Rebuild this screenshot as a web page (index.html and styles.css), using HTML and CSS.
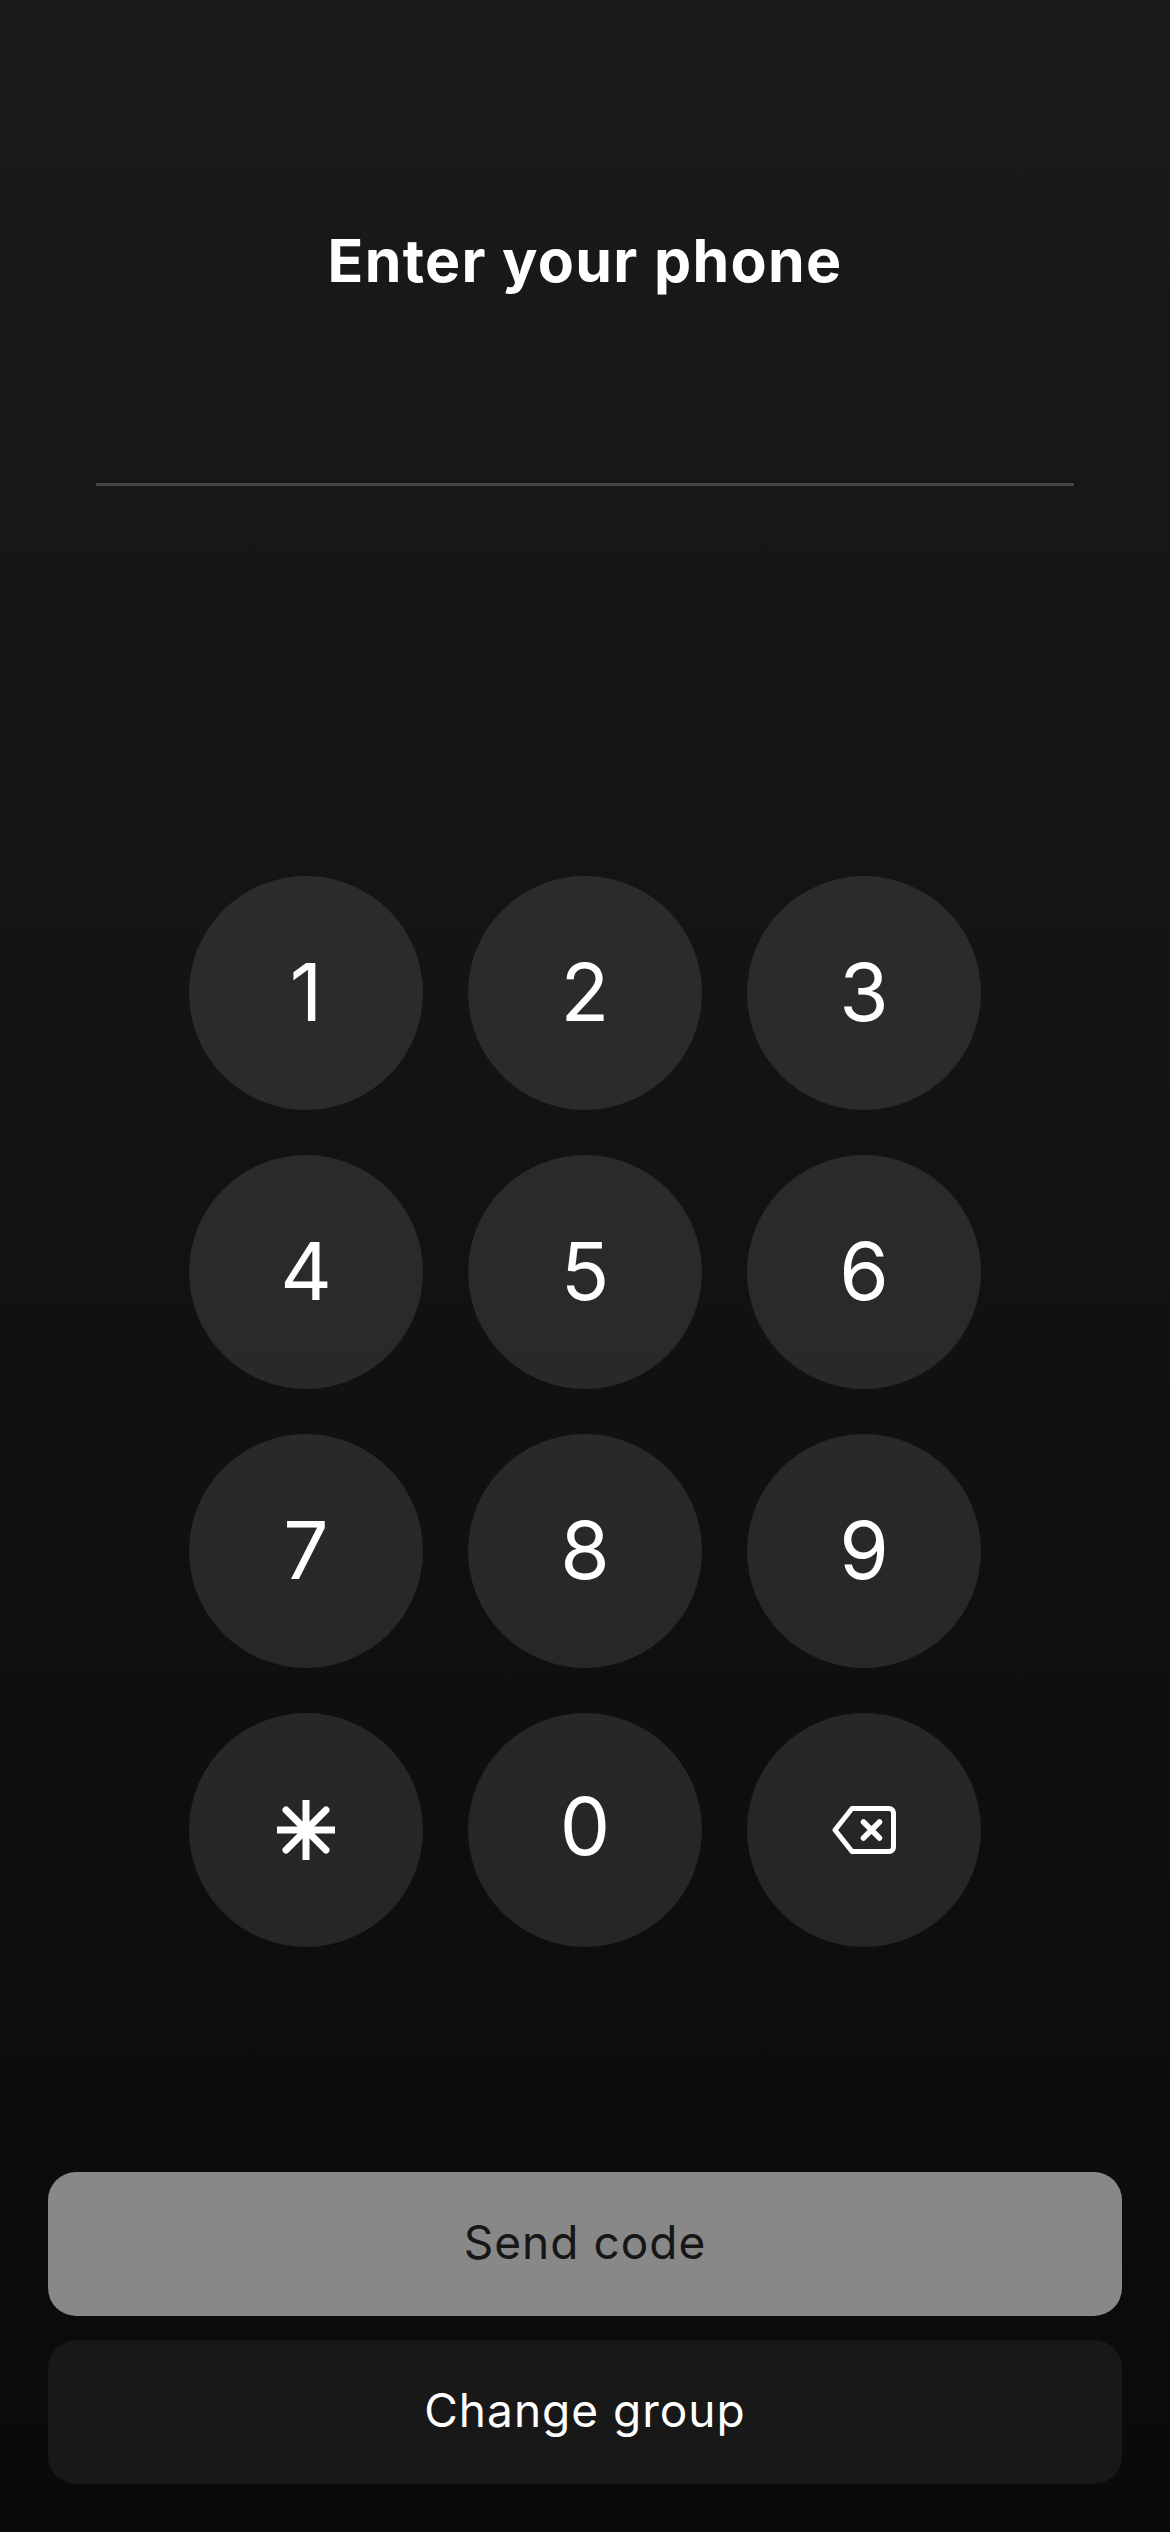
FILE: index.html
```html
<!DOCTYPE html>
<html>
	<head>
		<meta charset="utf-8">
		<title>Enter your phone</title>
		<link rel="stylesheet" href="styles.css">
	</head>
	<body>
		<div class="screen">
			<h1 class="title">Enter your phone</h1>
			<div class="phone-line"></div>
			<div class="keypad">
				<div class="key">1</div>
				<div class="key">2</div>
				<div class="key">3</div>
				<div class="key">4</div>
				<div class="key">5</div>
				<div class="key">6</div>
				<div class="key">7</div>
				<div class="key">8</div>
				<div class="key">9</div>
				<div class="key icon-key">
					<svg class="star-icon" viewBox="0 0 60 60" width="60" height="60">
						<path d="M30 0V60M1 30H59" stroke="#fff" stroke-width="7" fill="none"/>
						<path d="M10 10L50 50M50 10L10 50" stroke="#fff" stroke-width="7" stroke-linecap="round" fill="none"/>
					</svg>
				</div>
				<div class="key zero">0</div>
				<div class="key icon-key">
					<svg class="back-icon" viewBox="0 0 64 48" width="64" height="48">
						<path d="M20 2.500H57C59.500 2.500 61.500 4.500 61.500 7V41C61.500 43.500 59.500 45.500 57 45.500H20L3 24Z" stroke="#fff" stroke-width="5" stroke-linejoin="round" fill="none"/>
						<path d="M31.500 16L47.500 32M47.500 16L31.500 32" stroke="#fff" stroke-width="5.500" stroke-linecap="round" fill="none"/>
					</svg>
				</div>
			</div>
			<div class="actions">
				<button class="btn btn-send">Send code</button>
				<button class="btn btn-group">Change group</button>
			</div>
		</div>
	</body>
</html>
```
FILE: styles.css
```css
html, body {
	margin: 0;
	padding: 0;
}

body {
	font-family: Inter, "Liberation Sans", sans-serif;
	color: white;
	background-color: #0a0a0a;
}

.screen {
	height: 2532px;
	box-sizing: border-box;
	padding: 226px 48px 48px;
	display: flex;
	flex-direction: column;
	align-items: center;
	background: linear-gradient(to bottom, #1a1a1a, #0a0a0a);
}

.title {
	margin: 0;
	font-size: 59px;
	line-height: 70px;
	font-weight: 700;
	letter-spacing: 1.3px;
}

.phone-line {
	width: 978px;
	height: 3px;
	margin-top: 187px;
	background-color: #444;
}

.keypad {
	display: grid;
	grid-template-columns: repeat(3, 234px);
	grid-auto-rows: 234px;
	gap: 45px;
	margin-top: 390px;
}

.key {
	display: flex;
	align-items: center;
	justify-content: center;
	box-sizing: border-box;
	padding-bottom: 3px;
	border-radius: 50%;
	background-color: rgba(255, 255, 255, 0.1);
	font-size: 80px;
	font-weight: 400;
}

.icon-key {
	padding-bottom: 0;
}

.zero {
	padding-bottom: 10px;
}

.actions {
	margin-top: auto;
	width: 100%;
	display: flex;
	flex-direction: column;
	gap: 24px;
}

.btn {
	height: 144px;
	border: 0;
	border-radius: 28px;
	font-family: inherit;
	font-size: 46px;
	font-weight: 400;
	letter-spacing: 1px;
	padding: 0 0 5px;
}

.btn-send {
	background-color: #888;
	color: #161616;
}

.btn-group {
	background-color: #181818;
	color: white;
}
```
